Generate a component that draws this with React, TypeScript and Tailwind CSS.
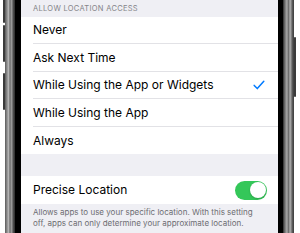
import React from "react";

const options = [
  { label: "Never", h: "h-[27px]" },
  { label: "Ask Next Time", h: "h-[28px]" },
  { label: "While Using the App or Widgets", h: "h-[27px]", checked: true },
  { label: "While Using the App", h: "h-[28px]" },
  { label: "Always", h: "h-[27px]", last: true },
];

function Check() {
  return (
    <svg width="12" height="10" viewBox="0 0 12 10" fill="none">
      <path d="M1.2 5.4 L4.3 8.6 L10.8 1.2" stroke="#007aff" strokeWidth="1.5" strokeLinecap="round" strokeLinejoin="round" />
    </svg>
  );
}

function Toggle() {
  return (
    <div className="w-[32px] h-[19px] rounded-full bg-[#34c759] flex items-center justify-end p-[1.5px]">
      <div className="w-[16px] h-[16px] rounded-full bg-white shadow-[0_1px_2px_rgba(0,0,0,0.2)]" />
    </div>
  );
}

export default function App() {
  return (
    <div className="w-[300px] h-[233px] bg-white flex overflow-hidden" style={{ fontFamily: "Inter, 'Liberation Sans', sans-serif" }}>
      {/* left bezel */}
      <div className="w-[3px]" />
      <div className="w-[2px] flex flex-col">
        <div className="h-[23px] bg-[#3a3a3a] rounded-b-[1px]" />
        <div className="h-[2px]" />
        <div className="h-[37px] bg-[#3a3a3a] rounded-[1px]" />
        <div className="h-[11px]" />
        <div className="h-[37px] bg-[#3a3a3a] rounded-[1px]" />
      </div>
      <div className="w-[10px] bg-[linear-gradient(90deg,#5a5a5a_0%,#8c8c8c_20%,#b4b4b4_35%,#6e6e6e_50%,#9a9a9a_65%,#4a4a4a_85%,#2a2a2a_100%)]" />
      <div className="w-[6px] bg-black" />

      {/* screen */}
      <div className="w-[257px] bg-[#efeff4] flex flex-col">
        <div className="h-[17px] pl-[12px] flex items-center text-[7.5px] tracking-[0.3px] text-[#848488]">
          ALLOW LOCATION ACCESS
        </div>
        <div className="bg-white pl-[12px]">
          {options.map((o) => (
            <div
              key={o.label}
              className={`${o.h} flex items-center justify-between pr-[13px] text-[12px] text-black ${o.last ? "" : "border-b border-[#e2e2e6]"}`}
            >
              <span>{o.label}</span>
              {o.checked && <Check />}
            </div>
          ))}
        </div>
        <div className="h-[22px]" />
        <div className="bg-white pl-[12px] pr-[11px] h-[28px] flex items-center justify-between text-[12px] text-black">
          <span>Precise Location</span>
          <Toggle />
        </div>
        <div className="pl-[12px] pr-[4px] pt-[3px] text-[8px] leading-[11px] text-[#6d6d72]">
          Allows apps to use your specific location. With this setting
          <br />
          off, apps can only determine your approximate location.
        </div>
      </div>

      {/* right bezel */}
      <div className="w-[5px] bg-black" />
      <div className="w-[11px] bg-[linear-gradient(90deg,#2a2a2a_0%,#6a6a6a_15%,#a8a8a8_35%,#6e6e6e_50%,#b0b0b0_65%,#5a5a5a_85%,#3a3a3a_100%)]" />
      <div className="w-[2px] flex flex-col">
        <div className="h-[37px]" />
        <div className="h-[60px] bg-[#3a3a3a] rounded-[1px]" />
      </div>
      <div className="w-[2px]" />
    </div>
  );
}
